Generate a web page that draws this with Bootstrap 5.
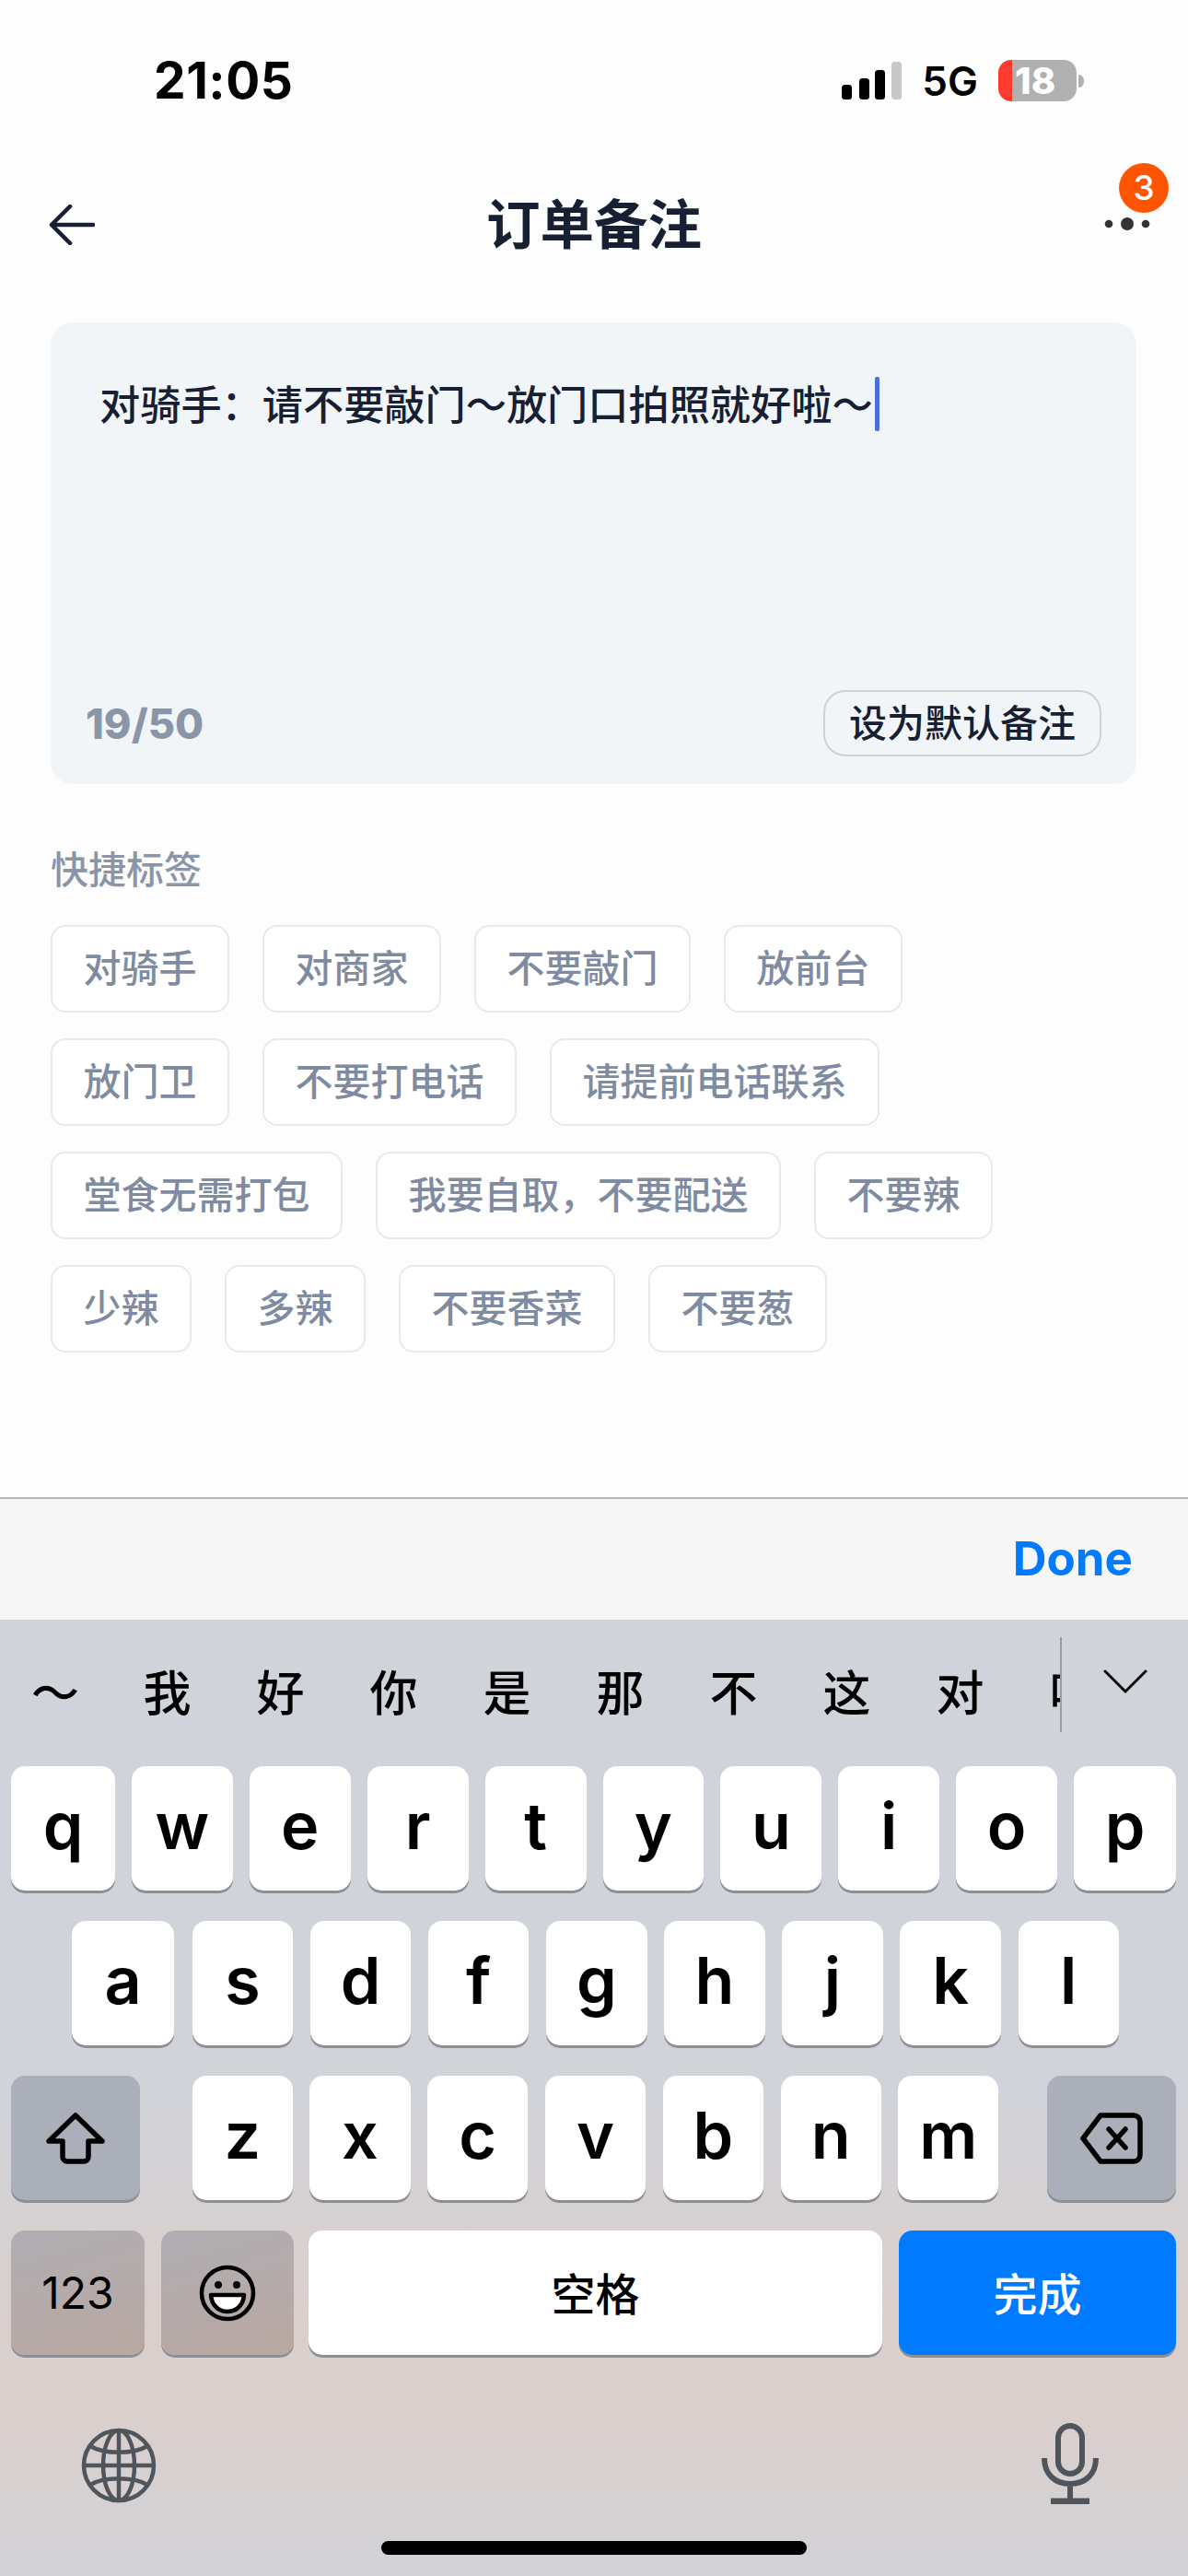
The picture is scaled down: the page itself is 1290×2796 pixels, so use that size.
<!DOCTYPE html>
<html lang="zh">
<head>
<meta charset="utf-8">
<title>订单备注</title>
<link href="https://cdn.jsdelivr.net/npm/bootstrap@5.3.0/dist/css/bootstrap.min.css" rel="stylesheet">
<style>
html,body{margin:0;background:#fdfdfd}
body{font-family:Inter,"Noto Sans CJK SC",sans-serif;color:#172033}
.screen{width:1290px;height:2796px;overflow:hidden}
.sbar{height:175px;padding:0 113px 0 167px}
.clock{font-size:55px;font-weight:700;color:#000;line-height:1;letter-spacing:.5px}
.sig{width:65px;height:41px;margin-right:22px}
.net{font-size:44px;font-weight:600;color:#000;line-height:1;margin-right:22px}
.batt{width:85px;height:45px;border-radius:14px;background:linear-gradient(90deg,#ff3b30 0,#ff3b30 15px,#b0b0b0 15px);color:#fff;font-size:40px;font-weight:800;line-height:45px;padding-left:18px}
.nub{width:6px;height:14px;margin-left:2px;background:#b0b0b0;border-radius:0 7px 7px 0}
.topnav{height:138px;padding:0 33px 0 53px;position:relative}
.ttl{position:absolute;left:0;right:0;text-align:center;font-size:58.5px;font-weight:700;line-height:1;margin:0}
.more{width:66px;height:16px;margin-top:-2px;position:relative}
.cnt{position:absolute;width:54px;height:54px;border-radius:50%;background:#ff5500;color:#fff;font-size:37px;font-weight:500;line-height:54px;text-align:center;left:24px;top:-58px}
.main{padding:37px 56px 0 55px}
.editor{height:501px;background:#f1f5f8;border-radius:24px;padding:59px 38px 30px 38px}
.note{font-size:44.2px;font-weight:500;line-height:59px;padding-left:15px;white-space:nowrap}
.notetxt{position:relative;top:2px}
.caret{display:inline-block;width:5px;height:59px;background:#4a6ee0;border-radius:2px;vertical-align:top;margin-left:2px}
.count{font-size:45px;font-weight:800;color:#8a96a8;line-height:1}
.setdef{height:72px;border:2px solid #cdd2da;border-radius:24px;padding:0 26px;font-size:41px;font-weight:500;line-height:66px;color:#172033;background:transparent}
.qhead{font-size:41px;font-weight:500;color:#8a96a8;line-height:48px;margin:69px 0 36px 0}
.tags{display:flex;flex-direction:column;gap:28px}
.tagrow{display:flex;gap:36px}
.tg{height:95px;padding:0 33.5px;border:2px solid #e6e9ef;border-radius:16px;background:#fff;font-size:41px;font-weight:500;color:#7f8ba0;line-height:91px;white-space:nowrap}
.donebar{height:133px;border-top:2px solid #b8b8b8;background:#f6f6f6;padding-right:60px;font-size:51px;font-weight:700;color:#007aff}
.kb{height:1038px;background:linear-gradient(180deg,#d0d3da 0,#d1d3d9 50%,#dacfcc 74%,#d9cfcd 84%,#d2d2d7 100%)}
.cands{height:159px}
.clist{width:1153px;height:103px;margin-top:19px;overflow:hidden;border-right:2px solid #9a9ca2}
.cc{flex:none;width:123px;text-align:center;font-size:52px;font-weight:500;color:#000;padding-top:20px;height:103px;line-height:84px}
.cc.first{width:120px}
.chev{width:48px;height:26px;margin:54px 0 0 45px}
.krow{display:flex;height:135px;margin-bottom:33px;gap:18px;padding:0 13px 0 12px}
.krow.r1 .k:first-child{flex:0 0 113px}
.krow.r1 .k:last-child{flex:0 0 111px}
.krow.r2{gap:18.7px;padding:0 75px 0 78px}
.krow.r2 .k:first-child{flex:0 0 111px;margin-right:1px}
.krow.r3{gap:18.7px}
.k{flex:1 1 0;min-width:0;background:#fff;border-radius:15px;box-shadow:0 3px 0 #8e8f94;display:flex;align-items:center;justify-content:center;font-size:70px;font-weight:600;line-height:1;color:#000;padding-bottom:6px}
.k.mod{flex:none;background:#aaafb9;padding:0}
.w140{width:140px}
.gapl{margin-left:34px}
.gapr{margin-right:38px}
.lt{background:linear-gradient(165deg,#b0adb3,#b9a8a1)!important}
.lbl{font-size:48px;font-weight:500;padding:0}
.k.cj{padding-top:5px}
.bot{padding:0 97px 0 88px;height:88px;margin-top:74px}
.homebar{width:462px;height:15px;border-radius:8px;background:#000;margin:40px auto 0}
</style>
</head>
<body>
<div class="screen d-flex flex-column">
  <div class="sbar d-flex align-items-center">
    <div class="clock me-auto">21:05</div>
    <svg class="sig" viewBox="0 0 65 41"><rect x="0" y="25" width="11" height="16" rx="3.5"/><rect x="19" y="18" width="11" height="23" rx="3.5"/><rect x="36" y="9" width="11" height="32" rx="3.5"/><rect x="54" y="0" width="11" height="41" rx="3.5" fill="#c8c8c8"/></svg>
    <div class="net">5G</div>
    <div class="batt">18</div>
    <div class="nub"></div>
  </div>
  <div class="topnav d-flex align-items-center justify-content-between">
    <svg width="50" height="44" viewBox="0 0 50 44" fill="none" stroke="#172033" stroke-width="4.5" stroke-linecap="round" stroke-linejoin="round"><path d="M23 2 3 22l20 20M3 22h45"/></svg>
    <h1 class="ttl">订单备注</h1>
    <div class="more">
      <svg width="66" height="16" viewBox="0 0 66 16" class="d-block" fill="#333"><circle cx="13" cy="8" r="4.3"/><circle cx="33" cy="8" r="7"/><circle cx="53" cy="8" r="4.3"/></svg>
      <span class="cnt">3</span>
    </div>
  </div>
  <div class="main flex-grow-1">
    <div class="editor d-flex flex-column justify-content-between">
      <div class="note"><span class="notetxt">对骑手：请不要敲门～放门口拍照就好啦～</span><span class="caret"></span></div>
      <div class="d-flex justify-content-between align-items-center">
        <span class="count">19/50</span>
        <button type="button" class="setdef">设为默认备注</button>
      </div>
    </div>
    <div class="qhead">快捷标签</div>
    <div class="tags">
      <div class="tagrow"><span class="tg">对骑手</span><span class="tg">对商家</span><span class="tg">不要敲门</span><span class="tg">放前台</span></div>
      <div class="tagrow"><span class="tg">放门卫</span><span class="tg">不要打电话</span><span class="tg">请提前电话联系</span></div>
      <div class="tagrow"><span class="tg">堂食无需打包</span><span class="tg">我要自取，不要配送</span><span class="tg">不要辣</span></div>
      <div class="tagrow"><span class="tg">少辣</span><span class="tg">多辣</span><span class="tg">不要香菜</span><span class="tg">不要葱</span></div>
    </div>
  </div>
  <div class="donebar d-flex align-items-center justify-content-end">Done</div>
  <div class="kb">
    <div class="cands d-flex align-items-start">
      <div class="clist d-flex">
        <span class="cc first">～</span><span class="cc">我</span><span class="cc">好</span><span class="cc">你</span><span class="cc">是</span><span class="cc">那</span><span class="cc">不</span><span class="cc">这</span><span class="cc">对</span><span class="cc">吧</span>
      </div>
      <svg class="chev" viewBox="0 0 48 26" fill="none" stroke="#000" stroke-width="3" stroke-linecap="round" stroke-linejoin="round"><path d="M2 2l22 22L46 2"/></svg>
    </div>
    <div class="krow r1"><div class="k">q</div><div class="k">w</div><div class="k">e</div><div class="k">r</div><div class="k">t</div><div class="k">y</div><div class="k">u</div><div class="k">i</div><div class="k">o</div><div class="k">p</div></div>
    <div class="krow r2"><div class="k">a</div><div class="k">s</div><div class="k">d</div><div class="k">f</div><div class="k">g</div><div class="k">h</div><div class="k">j</div><div class="k">k</div><div class="k">l</div></div>
    <div class="krow r3">
      <div class="k mod w140 gapr"><svg width="64" height="56" viewBox="0 0 64 56" fill="none" stroke="#000" stroke-width="5.5" stroke-linejoin="round"><path d="M32 3 61 31H46V48a5 5 0 0 1-5 5H23a5 5 0 0 1-5-5V31H3Z"/></svg></div>
      <div class="k">z</div><div class="k">x</div><div class="k">c</div><div class="k">v</div><div class="k">b</div><div class="k">n</div><div class="k">m</div>
      <div class="k mod w140 gapl"><svg width="68" height="56" viewBox="0 0 68 56" fill="none" stroke="#000" stroke-width="5.5" stroke-linejoin="round" stroke-linecap="round"><path d="M22 3H58a7 7 0 0 1 7 7V46a7 7 0 0 1-7 7H22L3 28Z"/><path d="M31 18 49 38M49 18 31 38"/></svg></div>
    </div>
    <div class="krow">
      <div class="k mod lt lbl" style="width:145px;font-weight:400">123</div>
      <div class="k mod lt" style="width:144px"><svg width="62" height="62" viewBox="0 0 62 62" fill="none" stroke="#000" stroke-width="4.5"><circle cx="31" cy="31" r="28"/><circle cx="21" cy="22" r="4" fill="#000" stroke="none"/><circle cx="41" cy="22" r="4" fill="#000" stroke="none"/><path d="M13 33H49C48 45 40 51 31 51S14 45 13 33Z" fill="#fff" stroke-linejoin="round"/></svg></div>
      <div class="k mod lbl cj" style="width:623px;background:#fff;margin-left:-2px">空格</div>
      <div class="k mod lbl cj" style="width:301px;background:#007aff;color:#fff">完成</div>
    </div>
    <div class="bot d-flex justify-content-between align-items-end">
      <svg width="82" height="84" viewBox="0 0 82 84" fill="none" stroke="#50555c" stroke-width="4.5"><circle cx="41" cy="42" r="38"/><ellipse cx="41" cy="42" rx="17" ry="38"/><path d="M41 4V80M3 42H79M10 21C25 30 57 30 72 21M10 63C25 54 57 54 72 63"/></svg>
      <svg width="62" height="88" viewBox="0 0 62 88" fill="none" stroke="#50555c" stroke-width="6"><rect x="18" y="3" width="26" height="52" rx="13"/><path d="M3 38C3 56 15 66 31 66S59 56 59 38M31 66V84"/><path d="M10 85H52" stroke-width="7"/></svg>
    </div>
    <div class="homebar"></div>
  </div>
</div>
<script src="https://cdn.jsdelivr.net/npm/bootstrap@5.3.0/dist/js/bootstrap.bundle.min.js"></script>
</body>
</html>
